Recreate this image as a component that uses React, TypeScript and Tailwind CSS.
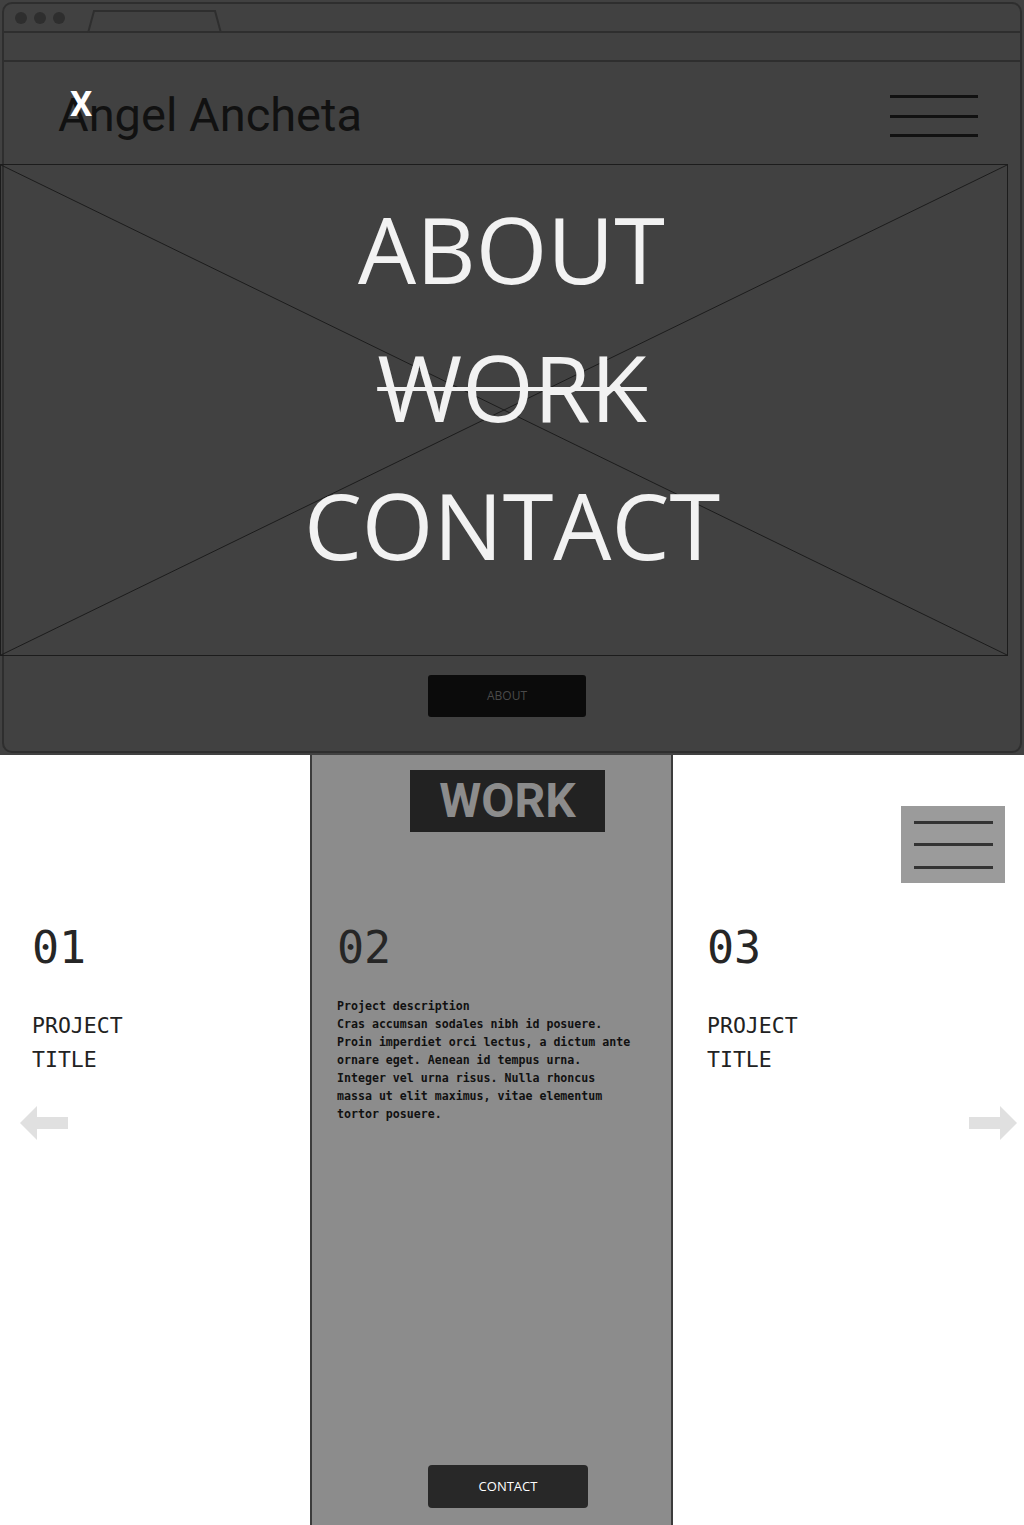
import { ReactNode } from 'react';

const mono = "font-['DejaVu_Sans_Mono','Liberation_Mono',monospace]";

const Hamburger = ({ color, width, gap }: { color: string; width: string; gap: string }) => (
  <div className={`flex flex-col ${gap} ${width}`}>
    <span className={`block h-[3px] w-full ${color}`} />
    <span className={`block h-[3px] w-full ${color}`} />
    <span className={`block h-[3px] w-full ${color}`} />
  </div>
);

const Column = ({ num, children, pad }: { num: string; children: ReactNode; pad: string }) => (
  <div className={`${pad} pt-[166px]`}>
    <div className={`${mono} text-[45px] leading-[54px] text-[#262626]`}>{num}</div>
    {children}
  </div>
);

const Arrow = ({ flip }: { flip?: boolean }) => (
  <svg width="49" height="34" viewBox="0 0 49 34" className={flip ? 'scale-x-[-1]' : ''}>
    <path d="M0 17 L17 0 L17 11 L48 11 L48 23 L17 23 L17 34 Z" fill="#e0e0e0" />
  </svg>
);

const App = () => {
  return (
    <div className="w-[1024px] bg-white font-['Open_Sans',sans-serif]">
      {/* mockup browser frame */}
      <div className="bg-[#414141] h-[755px] p-[2px]">
        <div className="h-[751px] border-2 border-[#2e2e2e] rounded-[10px] flex flex-col">
          <div className="h-[29px] border-b-2 border-[#2e2e2e] flex items-center pl-[11px] relative">
            <div className="flex gap-[7px]">
              <span className="w-[12px] h-[12px] rounded-full bg-[#2e2e2e]" />
              <span className="w-[12px] h-[12px] rounded-full bg-[#2e2e2e]" />
              <span className="w-[12px] h-[12px] rounded-full bg-[#2e2e2e]" />
            </div>
            <svg className="absolute left-[83px] bottom-[-2px]" width="136" height="23" viewBox="0 0 136 23">
              <path d="M1 23 L7 1 L128 1 L134 23" fill="none" stroke="#2e2e2e" strokeWidth="2" />
            </svg>
          </div>
          <div className="h-[29px] border-b-2 border-[#2e2e2e]" />
          <div className="h-[102px] flex items-center justify-between pl-[54px] pr-[42px] pt-[2px]">
            <div className="relative">
              <span className="font-['Roboto',sans-serif] text-[47px] leading-none text-[#111]">
                Angel Ancheta
              </span>
              <span className="absolute left-[12px] top-[-4px] font-['Roboto',sans-serif] font-bold text-[35px] leading-none text-white">
                X
              </span>
            </div>
            <div className="mt-[4px]">
              <Hamburger color="bg-[#111]" width="w-[88px]" gap="gap-[16.5px]" />
            </div>
          </div>
          <div className="relative -ml-[4px] w-[1008px] h-[492px] border border-[#1c1c1c] pt-[15px]">
            <svg className="absolute inset-0 w-full h-full" viewBox="0 0 1006 490" preserveAspectRatio="none">
              <line x1="0" y1="0" x2="1006" y2="490" stroke="#1c1c1c" strokeWidth="1" />
              <line x1="1006" y1="0" x2="0" y2="490" stroke="#1c1c1c" strokeWidth="1" />
            </svg>
            <nav className="relative flex flex-col items-center text-[92px] leading-[138px] text-[#f2f2f2]">
              <span className="ml-[15px]">ABOUT</span>
              <span className="line-through decoration-[4px] ml-[16px]">WORK</span>
              <span className="ml-[16px]">CONTACT</span>
            </nav>
          </div>
          <div className="pt-[19px] pl-[424px]">
            <button className="w-[158px] h-[42px] bg-[#0b0b0b] rounded-[3px] text-[12px] text-[#4a4a4a]">ABOUT</button>
          </div>
        </div>
      </div>

      {/* work section */}
      <div className="relative grid grid-cols-[310px_363px_1fr] h-[770px]">
        <div className="relative">
          <Column num="01" pad="pl-[32px]">
            <div className={`${mono} text-[21.5px] leading-[34px] text-[#222] mt-[34px]`}>
              PROJECT<br />TITLE
            </div>
          </Column>
          <div className="absolute left-[20px] top-[351px]">
            <Arrow />
          </div>
        </div>

        <div className="relative bg-[#8c8c8c] border-x-2 border-[#3c3c3c] flex flex-col">
          <div className="absolute left-[98px] top-[15px] w-[195px] h-[62px] bg-[#222] flex items-center justify-center">
            <span className="font-['Roboto',sans-serif] font-bold text-[48px] leading-none text-[#8c8c8c]">WORK</span>
          </div>
          <Column num="02" pad="pl-[25px]">
            <div className={`${mono} text-[11.6px] leading-[18px] font-semibold text-[#111] mt-[22px] w-[310px]`}>
              Project description<br />
              Cras accumsan sodales nibh id posuere.<br />
              Proin imperdiet orci lectus, a dictum ante<br />
              ornare eget. Aenean id tempus urna.<br />
              Integer vel urna risus. Nulla rhoncus<br />
              massa ut elit maximus, vitae elementum<br />
              tortor posuere.
            </div>
          </Column>
          <div className="mt-auto mb-[17px] pl-[116px]">
            <button className="w-[160px] h-[43px] bg-[#282828] rounded-[4px] text-[13px] text-white">CONTACT</button>
          </div>
        </div>

        <div className="relative">
          <div className="absolute right-[19px] top-[51px] w-[104px] h-[77px] bg-[#9b9b9b] flex items-center justify-center">
            <Hamburger color="bg-[#333]" width="w-[79px]" gap="gap-[19.5px]" />
          </div>
          <Column num="03" pad="pl-[34px]">
            <div className={`${mono} text-[21.5px] leading-[34px] text-[#222] mt-[34px]`}>
              PROJECT<br />TITLE
            </div>
          </Column>
          <div className="absolute right-[7px] top-[351px]">
            <Arrow flip />
          </div>
        </div>
      </div>
    </div>
  );
};

export default App;
